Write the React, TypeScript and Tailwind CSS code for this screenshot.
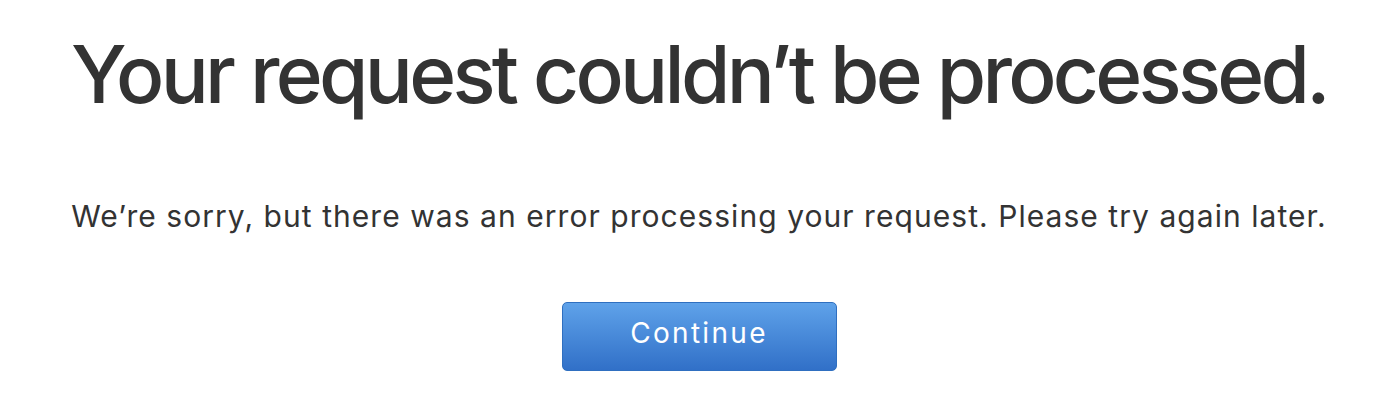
export default function App() {
  return (
    <div
      className="w-[1398px] h-[414px] bg-white flex flex-col items-center text-[#333333]"
      style={{ fontFamily: 'Inter, "Noto Sans", sans-serif' }}
    >
      <h1 className="mt-[26px] text-[80px] leading-[96px] font-medium tracking-[-3.7px] whitespace-nowrap">
        Your request couldn’t be processed.
      </h1>
      <p className="mt-[76px] text-[30px] leading-[36px] tracking-[1.05px] whitespace-nowrap">
        We’re sorry, but there was an error processing your request. Please try again later.
      </p>
      <button className="mt-[68px] w-[275px] h-[69px] rounded-[5px] border border-[#2f6fc0] bg-gradient-to-b from-[#5fa2e9] to-[#3170c8] text-white text-[28px] leading-none tracking-[2.3px] pb-[7px]">
        Continue
      </button>
    </div>
  );
}
